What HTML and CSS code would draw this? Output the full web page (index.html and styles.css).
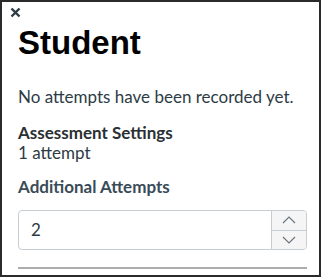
FILE: index.html
```html
<!doctype html>
<html>
<head>
    <meta charset="UTF-8">
    <link rel="stylesheet" href="styles.css">
</head>
<body>
<div class="panel">
    <div class="close-row">
        <svg class="close-icon" width="11" height="11" viewBox="0 0 11 11">
            <path d="M1.5 1.5 L9.5 9.5 M9.5 1.5 L1.5 9.5" stroke="#2d3b45" stroke-width="2.4" fill="none"/>
        </svg>
    </div>
    <div class="content">
        <h1 class="title">Student</h1>
        <p class="note">No attempts have been recorded yet.</p>
        <div class="settings">
            <div class="settings-head">Assessment Settings</div>
            <div class="settings-value">1 attempt</div>
        </div>
        <div class="field-label">Additional Attempts</div>
        <div class="number-input">
            <div class="number-value">2</div>
            <div class="spinner">
                <div class="spin-btn">
                    <svg width="14" height="8" viewBox="0 0 14 8"><path d="M1 7 L7 1 L13 7" stroke="#6b7780" stroke-width="1.2" fill="none"/></svg>
                </div>
                <div class="spin-btn">
                    <svg width="14" height="8" viewBox="0 0 14 8"><path d="M1 1 L7 7 L13 1" stroke="#6b7780" stroke-width="1.2" fill="none"/></svg>
                </div>
            </div>
        </div>
        <div class="rule"></div>
    </div>
</div>
</body>
</html>
```

FILE: styles.css
```css
body {
    margin: 0;
    background-color: #fff;
}

.panel {
    width: 321px;
    height: 277px;
    border: 2px solid #2b2b2b;
    box-sizing: border-box;
    overflow: hidden;
    font-family: Lato, "Noto Sans", sans-serif;
    color: #2d3b45;
}

.close-row {
    padding: 5px 0 0 8px;
    height: 13px;
}

.close-icon {
    display: block;
}

.content {
    padding: 0 12px 0 16px;
}

.title {
    margin: 3px 0 0 0;
    font-family: "Liberation Sans", Arial, sans-serif;
    font-size: 33px;
    line-height: 40px;
    font-weight: bold;
    color: #000;
}

.note {
    margin: 24px 0 0 0;
    font-size: 17px;
    line-height: 20px;
}

.settings {
    margin-top: 16px;
    font-size: 17px;
    line-height: 20px;
}

.settings-head {
    font-weight: bold;
    color: #2a2f33;
}

.field-label {
    margin-top: 14px;
    font-size: 17px;
    line-height: 20px;
    font-weight: bold;
    color: #394b58;
}

.number-input {
    margin-top: 13px;
    display: flex;
    height: 40px;
    box-sizing: border-box;
    border: 1px solid #c7cdd1;
    border-radius: 4px;
    overflow: hidden;
}

.number-value {
    flex: 1;
    padding-left: 12px;
    font-size: 17px;
    line-height: 38px;
}

.spinner {
    width: 34px;
    display: flex;
    flex-direction: column;
    border-left: 1px solid #c7cdd1;
    background-color: #f5f5f5;
}

.spin-btn {
    flex: 1;
    display: flex;
    align-items: center;
    justify-content: center;
}

.spin-btn + .spin-btn {
    border-top: 1px solid #c7cdd1;
}

.rule {
    margin-top: 17px;
    height: 2px;
    background-color: #adadad;
}
```
